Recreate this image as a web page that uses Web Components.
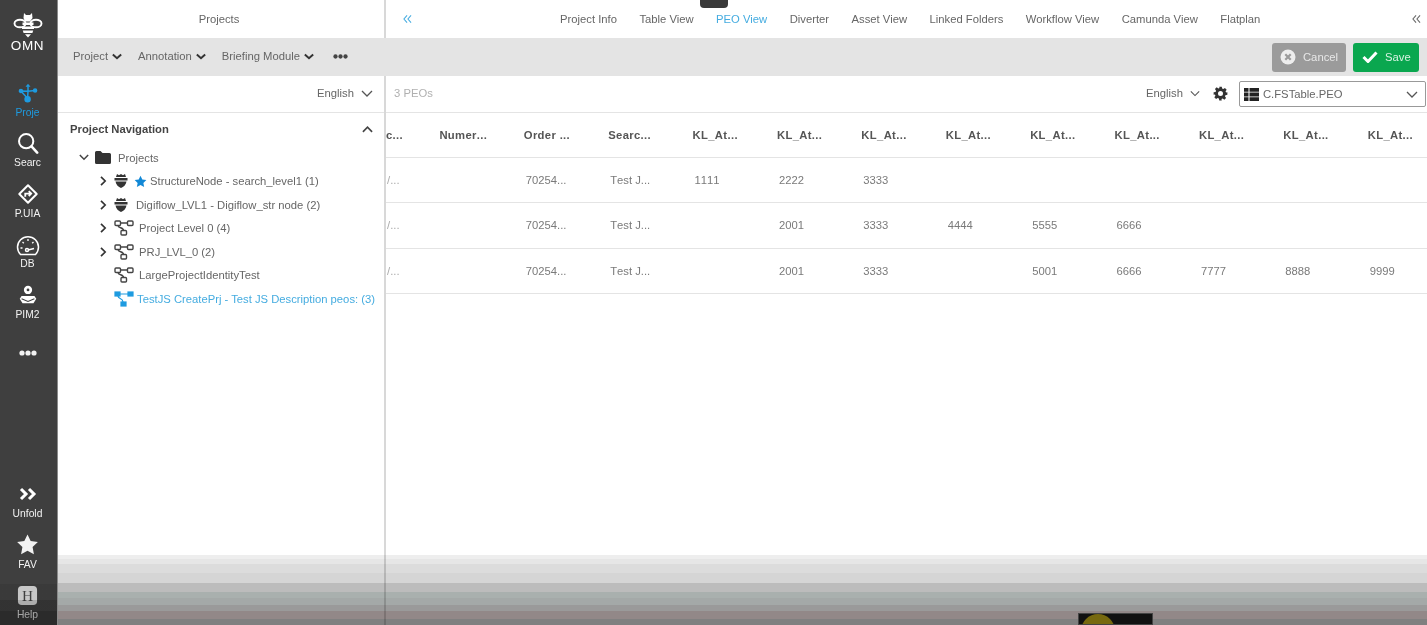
<!DOCTYPE html>
<html>
<head>
<meta charset="utf-8">
<title>Projects</title>
<style>
    html, body { margin: 0; height: 625px; overflow: hidden; background: #fff; }
    body { font-family: "Liberation Sans", Arial, sans-serif; font-size: 11.25px; color: #666; }
</style>
</head>
<body>

<om-app></om-app>

<script>

const ICONS = {
    bee: `<svg viewBox="0 0 30 30" width="30" height="30" fill="none" stroke="#fff">
            <ellipse cx="7" cy="13.500" rx="5.500" ry="3.800" stroke-width="1.900"/>
            <ellipse cx="23" cy="13.500" rx="5.500" ry="3.800" stroke-width="1.900"/>
            <path d="M11 3l2 2h4l2-2 .5 5-2.500 3.500h-5.000L10.500 8z" fill="#fff" stroke="none"/>
            <path d="M9.500 12.500h11v2.500h-11zM9 16.500h12v2.500H9zM9.800 20.500h10.400l-.8 2.500h-8.800zM12 24.200h6L15 27.500z" fill="#fff" stroke="none"/>
          </svg>`,
    project: `<svg viewBox="0 0 24 24" width="20" height="20" fill="#1e9be0" stroke="#1e9be0" stroke-width="1.800">
            <path d="M12 1l3 3.500H9z" stroke="none"/><circle cx="3.500" cy="9.500" r="1.800"/><circle cx="20.500" cy="9" r="1.800"/><circle cx="11.500" cy="19.500" r="3"/>
            <path d="M12 4v5M3.500 9.500l8.500 .5 8.500-1M12 10l-.5 8M3.500 9.500l7 8" fill="none"/>
          </svg>`,
    search: `<svg viewBox="0 0 24 24" width="22" height="22" fill="none" stroke="#fff" stroke-width="2.200">
            <circle cx="10" cy="10" r="7.800"/><path d="M15.800 15.800l6.200 6.700" stroke-linecap="round" stroke-width="2.800"/>
          </svg>`,
    route: `<svg viewBox="0 0 24 24" width="22" height="22" fill="none" stroke="#fff">
            <path d="M12 2.500L21.500 12 12 21.500 2.500 12z" stroke-width="2.200" stroke-linejoin="round"/>
            <path d="M9 15v-3.500h6M12.800 8.800l2.700 2.700-2.700 2.700" stroke-width="2"/>
          </svg>`,
    gauge: `<svg viewBox="0 -2 24 24" width="24" height="24" fill="none" stroke="#fff" stroke-width="1.500">
            <path d="M4.500 20.500A10.500 10.500 0 1 1 19.500 20.500z" stroke-linejoin="round"/>
            <path d="M12 16l6-1.500" stroke-width="1.800"/><circle cx="11" cy="16" r="1.500"/>
            <path d="M12 5v2M6.500 8l1.300 1.300M17.500 8l-1.300 1.300M4.500 14h2" stroke-width="1.300"/>
          </svg>`,
    pim: `<svg viewBox="0 0 24 24" width="22" height="22" fill="#fff">
            <circle cx="12" cy="6.500" r="4.500"/><path d="M5 13h14l2 3-3 5H6l-3-5z"/>
            <path d="M5 16l7 3 7-3" fill="none" stroke="#3f3f3f" stroke-width="1.200"/>
            <circle cx="12" cy="6.500" r="1.500" fill="#3f3f3f"/>
          </svg>`,
    dots: `<svg viewBox="0 0 18 6" width="18" height="6" fill="currentColor"><circle cx="3" cy="3" r="2.600"/><circle cx="9" cy="3" r="2.600"/><circle cx="15" cy="3" r="2.600"/></svg>`,
    unfold: `<svg viewBox="0 0 18 14" width="18" height="14" fill="none" stroke="#fff" stroke-width="3"><path d="M2 2l5 5-5 5M10 2l5 5-5 5"/></svg>`,
    star: `<svg viewBox="0 0 24 24" width="23" height="23" fill="currentColor"><path d="M12 1.500l3.300 6.900 7.500 1-5.500 5.200 1.400 7.500L12 18.400l-6.700 3.700 1.400-7.500L1.200 9.400l7.500-1z"/></svg>`,
    help: `<svg viewBox="0 0 22 22" width="21" height="21"><rect x="1" y="1" width="20" height="20" rx="4" fill="#d8d8d8"/><text x="11" y="16.500" text-anchor="middle" font-family="Liberation Serif, serif" font-size="16" fill="#444">H</text></svg>`,
    caretBold: `<svg viewBox="0 0 12 8" width="10" height="7" fill="none" stroke="#333" stroke-width="2.400"><path d="M1 1.500l5 4.500 5-4.500"/></svg>`,
    down: `<svg viewBox="0 0 12 7" width="12" height="7" fill="none" stroke="#555" stroke-width="1.300"><path d="M1 1l5 5 5-5"/></svg>`,
    up: `<svg viewBox="0 0 12 7" width="11" height="7" fill="none" stroke="#444" stroke-width="1.800"><path d="M1 6l5-5 5 5"/></svg>`,
    treeDown: `<svg viewBox="0 0 12 8" width="10" height="7" fill="none" stroke="#444" stroke-width="1.800"><path d="M1 1l5 5 5-5"/></svg>`,
    treeRight: `<svg viewBox="0 0 8 12" width="7" height="10" fill="none" stroke="#333" stroke-width="2"><path d="M1 1l5 5-5 5"/></svg>`,
    folder: `<svg viewBox="0 0 16 13" width="16" height="13" fill="#333"><path d="M0 1.500Q0 0 1.500 0h4L7.500 2H14.500Q16 2 16 3.500V11.500Q16 13 14.500 13h-13Q0 13 0 11.500z"/></svg>`,
    shield: `<svg viewBox="0 0 14 14" width="14" height="14" fill="#333"><path d="M3 0l2 1.300L7 0l2 1.300L11 0l1 3H2zM.5 4h13v2.500H.5zM1.500 7.500h11C12 11 9.500 13 7 14 4.500 13 2 11 1.500 7.500z"/></svg>`,
    tree: `<svg viewBox="0 0 20 16" width="20" height="16" fill="none" stroke="#444" stroke-width="1.400"><rect x="1" y="1" width="5.500" height="4.500" rx="1"/><rect x="13.500" y="1" width="5.500" height="4.500" rx="1"/><rect x="7" y="10.500" width="5.500" height="4.500" rx="1"/><path d="M6.500 3h7M4 5.500c0 3 5.500 1.500 5.500 5"/></svg>`,
    treeBlue: `<svg viewBox="0 0 20 16" width="20" height="16" fill="#1e9be0" stroke="#1e9be0" stroke-width="1.200"><rect x="1" y="1" width="5" height="4"/><rect x="14" y="1" width="5" height="4"/><rect x="7" y="11" width="5" height="4"/><path d="M6 3h8M4 5c0 3 5 2 5 6" fill="none"/></svg>`,
    starBlue: `<svg viewBox="0 0 24 24" width="13" height="13" fill="#1288d6"><path d="M12 1.500l3.300 6.900 7.500 1-5.500 5.200 1.400 7.500L12 18.400l-6.700 3.700 1.400-7.500L1.200 9.400l7.500-1z"/></svg>`,
    back: `<svg viewBox="0 0 10 9" width="9" height="8" fill="none" stroke="currentColor" stroke-width="1.200"><path d="M4.500 .5L1 4.500l3.500 4M9 .5L5.500 4.500 9 8.500"/></svg>`,
    xcircle: `<svg viewBox="0 0 16 16" width="16" height="16"><circle cx="8" cy="8" r="7.500" fill="#eee"/><path d="M5.300 5.300l5.400 5.400M10.700 5.300l-5.400 5.400" stroke="#9b9b9b" stroke-width="2.200"/></svg>`,
    check: `<svg viewBox="0 0 16 12" width="16" height="12" fill="none" stroke="#fff" stroke-width="3"><path d="M1.500 6l4.500 4.500L14.500 1.500"/></svg>`,
    gear: `<svg viewBox="0 0 24 24" width="15" height="15" fill="#333"><path d="M10 1h4l.6 3.100 1.900.8 2.600-1.800 2.800 2.800-1.800 2.600.8 1.900L23 10v4l-3.100.6-.8 1.900 1.800 2.600-2.800 2.800-2.600-1.800-1.900.8L14 23h-4l-.6-3.100-1.900-.8-2.600 1.800-2.800-2.800 1.800-2.600-.8-1.900L1 14v-4l3.100-.6.8-1.900-1.800-2.600 2.800-2.800 2.600 1.800 1.900-.8zM12 8a4 4 0 1 0 0 8 4 4 0 0 0 0-8z" fill-rule="evenodd"/></svg>`,
    table: `<svg viewBox="0 0 15 13" width="15" height="13" fill="#222"><path d="M0 0h4.500v3.800H0zM5.500 0H15v3.800H5.500zM0 4.600h4.500v3.800H0zM5.500 4.600H15v3.800H5.500zM0 9.200h4.500V13H0zM5.500 9.200H15V13H5.500z"/></svg>`
};

// small helper, every element sets its own shadow root the same way
class OmElement extends HTMLElement {
    render(html) {
        if (!this.shadowRoot) this.attachShadow({ mode: "open" });
        this.shadowRoot.innerHTML = html;
    }
}

class OmRailItem extends OmElement {
    connectedCallback() {
        const active = this.hasAttribute("active");
        this.render(`
<style>
    :host { display: flex; flex-direction: column; align-items: center; justify-content: flex-end; height: 50.500px; color: ${active ? "#1e9be0" : "#f2f2f2"}; font-size: 10.300px; }
    .icon { display: flex; align-items: center; justify-content: center; height: 26px; }
    .label { height: 14px; line-height: 14px; }
</style>
<div class="icon">${ICONS[this.getAttribute("icon")]}</div>
<div class="label"><slot></slot></div>`);
    }
}

class OmRail extends OmElement {
    connectedCallback() {
        this.render(`
<style>
    :host { display: flex; flex-direction: column; position: relative; flex: 0 0 58px; width: 58px; height: 625px; padding-right: 2px; background: #3f3f3f; border-right: 1px solid #8a8a8a; box-sizing: border-box; }
    .logo { display: flex; flex-direction: column; align-items: center; height: 69px; padding-top: 10px; box-sizing: border-box; color: #fff; }
    .logo b { font-size: 13.500px; font-weight: 400; line-height: 14px; margin-top: -1px; letter-spacing: .6px; }
    .dots { display: flex; justify-content: center; color: #f2f2f2; padding-top: 28px; }
    .bottom { margin-top: auto; margin-bottom: 3px; }
    .shade { position: absolute; left: 0; right: 0; top: 555px; bottom: 0; pointer-events: none;
             background: linear-gradient(to bottom, transparent 0 29px, rgba(0,0,0,.08) 29px 45px, rgba(0,0,0,.2) 45px 56px, rgba(0,0,0,.32) 56px 100%); }
</style>
<div class="logo">${ICONS.bee}<b>OMN</b></div>
<om-rail-item icon="project" active>Proje</om-rail-item>
<om-rail-item icon="search">Searc</om-rail-item>
<om-rail-item icon="route">P.UIA</om-rail-item>
<om-rail-item icon="gauge">DB</om-rail-item>
<om-rail-item icon="pim">PIM2</om-rail-item>
<div class="dots">${ICONS.dots}</div>
<div class="bottom">
    <om-rail-item icon="unfold">Unfold</om-rail-item>
    <om-rail-item icon="star">FAV</om-rail-item>
    <om-rail-item icon="help">Help</om-rail-item>
</div>
<div class="shade"></div>`);
    }
}

class OmTreeNode extends OmElement {
    connectedCallback() {
        const depth = Number(this.getAttribute("depth") || 1);
        const arrow = this.getAttribute("arrow");
        const icon = this.getAttribute("icon");
        const star = this.hasAttribute("star");
        const gap = this.getAttribute("gap") || 3;
        const selected = this.hasAttribute("selected");
        this.render(`
<style>
    :host { display: flex; align-items: center; height: 23.500px; padding-left: ${depth === 0 ? 12 : 32.5}px; color: ${selected ? "#45ace0" : "#666"}; white-space: nowrap; }
    .arrow { width: ${depth === 0 ? 16 : 14.5}px; display: flex; align-items: center; }
    .icon { display: flex; align-items: center; }
    .star { display: flex; margin-left: 6px; margin-right: -1px; }
    .text { margin-left: ${gap}px; }
</style>
<span class="arrow">${arrow ? ICONS[arrow] : ""}</span>
<span class="icon">${ICONS[icon]}</span>
${star ? `<span class="star">${ICONS.starBlue}</span>` : ""}
<span class="text"><slot></slot></span>`);
    }
}

class OmPanel extends OmElement {
    connectedCallback() {
        this.render(`
<style>
    :host { display: flex; flex-direction: column; flex: 0 0 328px; width: 328px; height: 625px; box-sizing: border-box; border-right: 2px solid #d8d8d8; color: #666; }
    .title { height: 38px; display: flex; align-items: center; justify-content: center; padding-right: 4px; }
    .menu { height: 38px; box-sizing: border-box; padding: 0 0 2px 15px; background: #e4e4e4; display: flex; align-items: center; gap: 16px; margin-right: -2px; }
    .menu span { display: flex; align-items: center; gap: 4px; white-space: nowrap; }
    .menu .more { margin-left: 3px; color: #444; }
    .lang { height: 36px; box-sizing: content-box; border-bottom: 1px solid #e4e4e4; display: flex; align-items: center; justify-content: flex-end; gap: 7px; padding-right: 11px; }
    .lang span { margin-top: -2px; }
    .lang svg { margin-top: -2px; }
    .nav { display: flex; align-items: center; justify-content: space-between; height: 32px; margin-bottom: 1px; padding: 0 11px 0 12px; font-weight: 700; color: #444; }
    .tree { padding-left: 9px; }
</style>
<div class="title">Projects</div>
<div class="menu">
    <span>Project ${ICONS.caretBold}</span>
    <span>Annotation ${ICONS.caretBold}</span>
    <span>Briefing Module ${ICONS.caretBold}</span>
    <span class="more">${ICONS.dots.replace('width="18"', 'width="15"').replace('height="6"', 'height="5"')}</span>
</div>
<div class="lang"><span>English</span>${ICONS.down}</div>
<div class="nav"><span>Project Navigation</span>${ICONS.up}</div>
<div class="tree">
    <om-tree-node depth="0" arrow="treeDown" icon="folder" gap="7">Projects</om-tree-node>
    <om-tree-node arrow="treeRight" icon="shield" star gap="4">StructureNode - search_level1 (1)</om-tree-node>
    <om-tree-node arrow="treeRight" icon="shield" gap="8">Digiflow_LVL1 - Digiflow_str node (2)</om-tree-node>
    <om-tree-node arrow="treeRight" icon="tree" gap="5">Project Level 0 (4)</om-tree-node>
    <om-tree-node arrow="treeRight" icon="tree" gap="5">PRJ_LVL_0 (2)</om-tree-node>
    <om-tree-node icon="tree" gap="5">LargeProjectIdentityTest</om-tree-node>
    <om-tree-node icon="treeBlue" gap="3" selected>TestJS CreatePrj - Test JS Description peos: (3)</om-tree-node>
</div>`);
    }
}

class OmTabs extends OmElement {
    connectedCallback() {
        const tabs = ["Project Info", "Table View", "PEO View", "Diverter", "Asset View", "Linked Folders", "Workflow View", "Camunda View", "Flatplan"];
        this.render(`
<style>
    :host { display: flex; align-items: center; height: 38px; position: relative; color: #666; }
    .back { display: flex; margin-left: 17px; color: #45ace0; }
    .tabs { display: flex; gap: 22.500px; margin-left: 148px; white-space: nowrap; }
    .on { color: #45ace0; }
    .end { display: flex; margin-left: auto; margin-right: 6px; color: #666; }
    .grip { position: absolute; left: 314px; top: 0; width: 28px; height: 8px; background: #3a3a3a; border-radius: 0 0 4px 4px; }
</style>
<span class="back">${ICONS.back}</span>
<div class="tabs">${tabs.map(t => `<span class="${t === "PEO View" ? "on" : ""}">${t}</span>`).join("")}</div>
<span class="end">${ICONS.back}</span>
<div class="grip"></div>`);
    }
}

class OmActions extends OmElement {
    connectedCallback() {
        this.render(`
<style>
    :host { display: flex; align-items: center; justify-content: flex-end; gap: 7px; height: 38px; background: #e4e4e4; padding-right: 8px; box-sizing: border-box; }
    .btn { display: flex; align-items: center; height: 29px; border-radius: 3px; box-sizing: border-box; color: #e8e8e8; }
    .cancel { width: 74px; background: #9b9b9b; padding-left: 8px; gap: 7px; }
    .save { width: 66px; background: #0aa74f; padding-left: 9px; gap: 7px; color: #d8f2e2; }
</style>
<div class="btn cancel">${ICONS.xcircle}<span>Cancel</span></div>
<div class="btn save">${ICONS.check}<span>Save</span></div>`);
    }
}

class OmFilter extends OmElement {
    connectedCallback() {
        this.render(`
<style>
    :host { display: flex; align-items: center; height: 36px; border-bottom: 1px solid #e4e4e4; padding: 0 1px 0 8px; color: #666; }
    .count { color: #b0b0b0; margin-top: -2px; }
    .lang { margin-left: auto; margin-top: -2px; display: flex; align-items: center; gap: 7px; }
    .gear { display: flex; margin-left: 13px; margin-top: -1px; }
    .select { display: flex; align-items: center; width: 187px; height: 26px; margin-left: 11px; border: 1px solid #999; border-radius: 2px; box-sizing: border-box; padding: 0 7px 0 4px; gap: 4px; }
    .select svg:last-child { margin-left: auto; }
</style>
<span class="count">3 PEOs</span>
<span class="lang">English ${ICONS.down.replace('width="12"', 'width="10"')}</span>
<span class="gear">${ICONS.gear}</span>
<div class="select">${ICONS.table}<span>C.FSTable.PEO</span>${ICONS.down}</div>`);
    }
}

class OmPeoTable extends OmElement {
    connectedCallback() {
        const head = ["c...", "Numer...", "Order ...", "Searc...", "KL_At...", "KL_At...", "KL_At...", "KL_At...", "KL_At...", "KL_At...", "KL_At...", "KL_At...", "KL_At..."];
        const rows = [
            ["/...", "", "70254...", "Test J...", "1111", "2222", "3333", "", "", "", "", "", ""],
            ["/...", "", "70254...", "Test J...", "", "2001", "3333", "4444", "5555", "6666", "", "", ""],
            ["/...", "", "70254...", "Test J...", "", "2001", "3333", "", "5001", "6666", "7777", "8888", "9999"]
        ];
        const cells = (r, cls) => `<div class="row ${cls}">${r.map(c => `<span>${c}</span>`).join("")}</div>`;
        this.render(`
<style>
    :host { display: block; font-kerning: none; }
    .row { display: grid; grid-template-columns: 53.400px repeat(11, 84.400px) 1fr; align-items: center; border-bottom: 1px solid #e4e4e4; box-sizing: border-box; height: 45.300px; white-space: nowrap; }
    .row span { padding-left: 2px; color: #7a7a7a; }
    .row span:first-child { padding-left: 1px; color: #aaa; }
    .head { height: 45px; }
    .head span, .head span:first-child { padding-left: 0; font-weight: 700; color: #555; letter-spacing: .35px; }
</style>
${cells(head, "head")}
${rows.map(r => cells(r, "")).join("")}`);
    }
}

class OmApp extends OmElement {
    connectedCallback() {
        this.render(`
<style>
    /* the reference is a soft, rescaled capture */
    :host { display: flex; position: relative; width: 1427px; height: 625px; overflow: hidden; filter: blur(.35px); }
    main { flex: 1; min-width: 0; overflow: hidden; }
    .thumb { position: absolute; left: 1078px; top: 613px; width: 75px; height: 12px; background: #111; overflow: hidden; border: 1px solid #444; box-sizing: border-box; }
    .thumb i { position: absolute; left: 2px; top: 0; width: 34px; height: 34px; border-radius: 50%; background: #77690f; }
    .fade { position: absolute; left: 58px; right: 0; top: 555px; bottom: 0; mix-blend-mode: multiply; pointer-events: none;
        background: linear-gradient(to bottom,
            #eeeeee 0 4px, #e6e6e6 4px 9px, #dcdcdc 9px 18px, #d5d5d5 18px 28px, #bcbcbc 28px 37px,
            #a9b0ae 37px 43px, #a4a9a8 43px 50px, #9a9a9a 50px 56px, #928888 56px 64px, #808080 64px 70px); }
</style>
<om-rail></om-rail>
<om-panel></om-panel>
<main>
    <om-tabs></om-tabs>
    <om-actions></om-actions>
    <om-filter></om-filter>
    <om-peo-table></om-peo-table>
</main>
<div class="fade"></div>
<div class="thumb"><i></i></div>`);
    }
}

customElements.define("om-rail-item", OmRailItem);
customElements.define("om-rail", OmRail);
customElements.define("om-tree-node", OmTreeNode);
customElements.define("om-panel", OmPanel);
customElements.define("om-tabs", OmTabs);
customElements.define("om-actions", OmActions);
customElements.define("om-filter", OmFilter);
customElements.define("om-peo-table", OmPeoTable);
customElements.define("om-app", OmApp);

</script>

</body>
</html>
